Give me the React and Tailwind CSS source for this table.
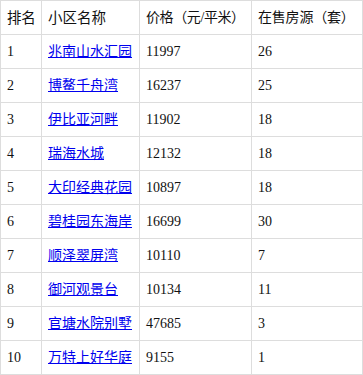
import React from "react";

const rows = [
  { rank: 1, name: "兆南山水汇园", price: "11997", count: "26" },
  { rank: 2, name: "博鳌千舟湾", price: "16237", count: "25" },
  { rank: 3, name: "伊比亚河畔", price: "11902", count: "18" },
  { rank: 4, name: "瑞海水城", price: "12132", count: "18" },
  { rank: 5, name: "大印经典花园", price: "10897", count: "18" },
  { rank: 6, name: "碧桂园东海岸", price: "16699", count: "30" },
  { rank: 7, name: "顺泽翠屏湾", price: "10110", count: "7" },
  { rank: 8, name: "御河观景台", price: "10134", count: "11" },
  { rank: 9, name: "官塘水院别墅", price: "47685", count: "3" },
  { rank: 10, name: "万特上好华庭", price: "9155", count: "1" },
];

const cell = "border border-[#ddd] px-[6px] py-0 text-left whitespace-nowrap overflow-visible";

export default function App() {
  return (
    <div className="bg-white w-[363px] h-[375px]">
      <table
        className="table-fixed border-collapse w-[362px] text-[14px] leading-[20px] text-[#111]"
        style={{ fontFamily: '"Liberation Serif", "Noto Sans CJK SC", serif' }}
      >
        <colgroup>
          <col className="w-[41px]" />
          <col className="w-[98px]" />
          <col className="w-[112px]" />
          <col className="w-[111px]" />
        </colgroup>
        <thead>
          <tr className="h-[34px]">
            <th className={`${cell} font-normal text-[14.5px] tracking-[-0.3px]`}>排名</th>
            <th className={`${cell} font-normal text-[14.5px]`}>小区名称</th>
            <th className={`${cell} font-normal text-[14px] tracking-[-0.4px]`}>价格（元/平米）</th>
            <th className={`${cell} font-normal text-[14px] tracking-[-0.2px]`}>在售房源（套）</th>
          </tr>
        </thead>
        <tbody>
          {rows.map((r) => (
            <tr key={r.rank} className="h-[34px]">
              <td className={cell}>{r.rank}</td>
              <td className={cell}>
                <a href="#" className="text-[#0000ee] underline">
                  {r.name}
                </a>
              </td>
              <td className={cell}>{r.price}</td>
              <td className={cell}>{r.count}</td>
            </tr>
          ))}
        </tbody>
      </table>
    </div>
  );
}
